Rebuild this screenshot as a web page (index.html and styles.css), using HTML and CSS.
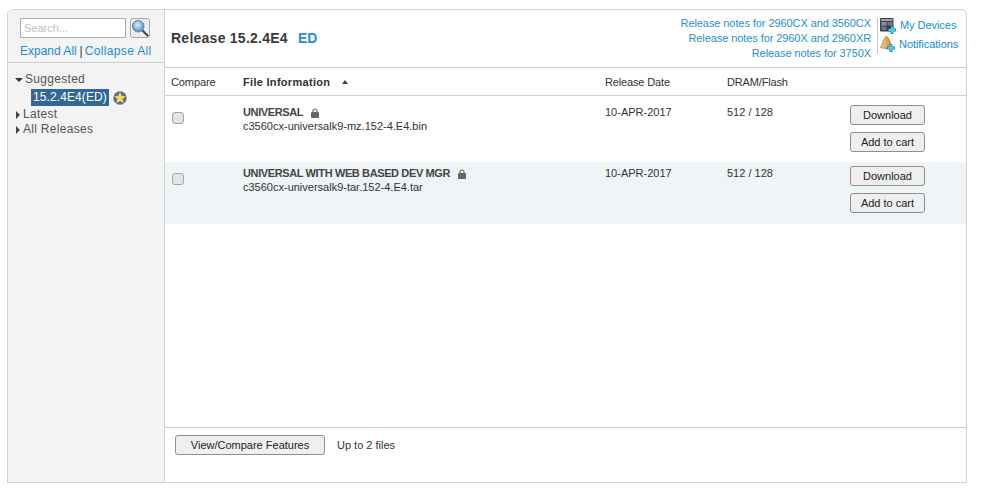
FILE: index.html
```html
<!DOCTYPE html>
<html lang="en">
<head>
<meta charset="utf-8">
<title>Release 15.2.4E4</title>
<link rel="stylesheet" href="styles.css">
</head>
<body>
<div class="panel">
  <aside class="side">
    <div class="side-top">
      <div class="search-row">
        <input class="search" type="text" placeholder="Search...">
        <button class="search-btn" type="button" aria-label="Search">
          <svg width="18" height="18" viewBox="0 0 18 18">
            <defs><radialGradient id="g" cx="0.45" cy="0.4" r="0.7"><stop offset="0" stop-color="#dcecfb"/><stop offset="0.55" stop-color="#7fb0e6"/><stop offset="1" stop-color="#2f6fc4"/></radialGradient></defs>
            <path d="M11 11 L16.5 16.5" stroke="#4a4a4a" stroke-width="2.2" stroke-linecap="round"/>
            <circle cx="7.2" cy="7.2" r="5.8" fill="url(#g)" stroke="#77828e" stroke-width="1"/>
          </svg>
        </button>
      </div>
      <div class="expand"><a>Expand All</a><span class="pipe"> | </span><a class="collapse">Collapse All</a></div>
    </div>
    <ul class="tree">
      <li class="node"><span class="tri-down"></span>Suggested</li>
      <li class="leaf"><span class="sel">15.2.4E4(ED)</span>
        <svg class="star" width="14" height="14" viewBox="0 0 15 15">
          <circle cx="7.5" cy="7.5" r="7.2" fill="#666d76"/>
          <path d="M7.5 2 L9.1 5.6 L13 6 L10 8.5 L10.9 12.4 L7.5 10.4 L4.1 12.4 L5 8.5 L2 6 L5.9 5.6 Z" fill="#f8d84e" stroke="#fff2a8" stroke-width="0.5"/>
        </svg>
      </li>
      <li class="node"><span class="tri-right"></span>Latest</li>
      <li class="node"><span class="tri-right"></span>All Releases</li>
    </ul>
  </aside>
  <main class="main">
    <header class="head">
      <h1 class="title">Release 15.2.4E4<span class="ed">ED</span></h1>
      <div class="notes">
        <a>Release notes for 2960CX and 3560CX</a>
        <a>Release notes for 2960X and 2960XR</a>
        <a>Release notes for 3750X</a>
      </div>
      <div class="tools">
        <div class="tool">
          <svg width="16" height="16" viewBox="0 0 16 16">
            <rect x="0" y="0" width="13.5" height="13.5" rx="1" fill="#3a4450"/>
            <rect x="1" y="1" width="11.5" height="2" fill="#9aa3ad"/>
            <rect x="1.5" y="4" width="5" height="3.5" fill="#8a94a0"/><rect x="7.5" y="4" width="5" height="3.5" fill="#6f7a86"/>
            <rect x="1.5" y="8.5" width="5" height="3.5" fill="#6f7a86"/><rect x="7.5" y="8.5" width="5" height="3.5" fill="#2a3038"/>
            <path d="M12 8 V16 M8 12 H16" stroke="#1c93b8" stroke-width="3"/>
            <path d="M12 9 V15 M9 12 H15" stroke="#5fd6ea" stroke-width="1.4"/>
          </svg>
          <a>My Devices</a>
        </div>
        <div class="tool tool-b">
          <svg width="16" height="16" viewBox="0 0 16 16">
            <defs><linearGradient id="b" x1="0" x2="1" y1="0" y2="0"><stop offset="0" stop-color="#f6d28a"/><stop offset="1" stop-color="#c9802c"/></linearGradient></defs>
            <path d="M6.5 0.5 C7.8 0.5 8.3 1.6 8.5 2.8 C10.6 4 10 8.5 12.6 11.5 Q6.5 14 0.4 11.5 C3 8.5 2.4 4 4.5 2.8 C4.7 1.6 5.2 0.5 6.5 0.5 Z" fill="url(#b)" stroke="#a8702a" stroke-width="0.6"/>
            <path d="M11 8 V16 M7 12 H15" stroke="#1c93b8" stroke-width="3"/>
            <path d="M11 9 V15 M8 12 H14" stroke="#5fd6ea" stroke-width="1.4"/>
          </svg>
          <a>Notifications</a>
        </div>
      </div>
    </header>
    <div class="cols row-grid">
      <span class="cmp">Compare</span>
      <span class="fi">File Information<span class="sort"></span></span>
      <span class="hd">Release Date</span>
      <span class="hd">DRAM/Flash</span>
      <span></span>
    </div>
    <div class="row row-grid">
      <span><input class="check" type="checkbox"></span>
      <div>
        <div class="name">UNIVERSAL<svg class="lock" width="8" height="10" viewBox="0 0 8 10"><path d="M2 4.5V3a2 2 0 0 1 4 0v1.5" fill="none" stroke="#666" stroke-width="1.2"/><rect y="4" width="8" height="6" rx="1" fill="#666"/></svg></div>
        <div class="file">c3560cx-universalk9-mz.152-4.E4.bin</div>
      </div>
      <span class="cell">10-APR-2017</span>
      <span class="cell">512 / 128</span>
      <div class="acts"><button class="btn" type="button">Download</button><button class="btn" type="button">Add to cart</button></div>
    </div>
    <div class="row row-grid shade">
      <span><input class="check" type="checkbox"></span>
      <div>
        <div class="name">UNIVERSAL WITH WEB BASED DEV MGR<svg class="lock" width="8" height="10" viewBox="0 0 8 10"><path d="M2 4.5V3a2 2 0 0 1 4 0v1.5" fill="none" stroke="#666" stroke-width="1.2"/><rect y="4" width="8" height="6" rx="1" fill="#666"/></svg></div>
        <div class="file">c3560cx-universalk9-tar.152-4.E4.tar</div>
      </div>
      <span class="cell">10-APR-2017</span>
      <span class="cell">512 / 128</span>
      <div class="acts"><button class="btn" type="button">Download</button><button class="btn" type="button">Add to cart</button></div>
    </div>
    <footer class="foot">
      <button class="btn btn-wide" type="button">View/Compare Features</button>
      <span>Up to 2 files</span>
    </footer>
  </main>
</div>
</body>
</html>
```
FILE: styles.css
```css
* { box-sizing: border-box; }
html, body { margin: 0; background: #fff; }
body { padding: 9px 18px 14px 7px; font: 11px "Liberation Sans", Arial, sans-serif; color: #333; }
a { color: #1f8fd0; }

.panel { display: flex; height: 474px; width: 960px; border: 1px solid #d2d2d2; border-radius: 6px 6px 0 0; }

.side { width: 157px; flex: none; background: #f3f3f3; border-right: 1px solid #cfcfcf; border-radius: 5px 0 0 0; }
.side-top { height: 53px; padding: 8px 0 0 12px; border-bottom: 1px solid #d0d0d0; }
.search-row { display: flex; align-items: center; gap: 4px; }
.search { width: 106px; height: 20px; padding: 0 3px; border: 1px solid #ababab; background: #fff; font: 11px "Liberation Sans", Arial, sans-serif; margin: 0; outline: 0; }
.search::placeholder { color: #c0c0c0; opacity: 1; }
.search-btn { width: 20px; height: 20px; padding: 0; margin: 0; display: flex; align-items: center; justify-content: center; background: #efefef; border: 1px solid #a8a8a8; border-radius: 3px; }
.expand { margin-top: 6px; font-size: 12px; line-height: 14px; white-space: nowrap; }
.pipe { color: #333; letter-spacing: -0.6px; }
.collapse { letter-spacing: 0.35px; }

.tree { list-style: none; margin: 0; padding: 9px 0 0 8px; font-size: 12px; letter-spacing: 0.3px; color: #555; }
.node { height: 15px; line-height: 15px; display: flex; align-items: center; }
.tri-down { width: 0; height: 0; margin: 0 2px 0 -1px; border: 4px solid transparent; border-top: 4px solid #333; border-bottom: 0; }
.tri-right { width: 0; height: 0; margin-right: 3px; border: 4px solid transparent; border-left: 4px solid #444; border-right: 0; }
.leaf { height: 17px; padding-left: 15px; display: flex; align-items: center; gap: 4px; margin: 2px 0 1px; }
.sel { background: #336699; color: #fff; padding: 0 2px; height: 17px; line-height: 17px; letter-spacing: 0.1px; }
.star { flex: none; }

.main { flex: 1; display: flex; flex-direction: column; min-width: 0; }
.head { height: 58px; display: flex; align-items: flex-start; border-bottom: 1px solid #cfcfcf; }
.title { margin: 20px 0 0 6px; font-size: 14px; line-height: 16px; font-weight: bold; letter-spacing: 0.25px; color: #3a3a3a; white-space: nowrap; }
.ed { margin-left: 10px; letter-spacing: 0; color: #2a8fd0; }
.notes { flex: 1; display: flex; flex-direction: column; align-items: flex-end; padding-top: 6px; line-height: 15px; }
.notes a { font-size: 11px; letter-spacing: -0.08px; color: #2a8fd0; }
.tools { width: 89px; height: 36px; margin: 8px 0 0 6px; padding-left: 2px; border-left: 1px solid #c8c8c8; flex: none; }
.tool { display: flex; align-items: flex-start; gap: 4px; height: 16px; white-space: nowrap; line-height: 14px; }
.tool a { color: #0f90d8; letter-spacing: -0.05px; }
.tool-b { margin-top: 2px; gap: 3px; }
.tool-b a { padding-top: 1px; }

.row-grid { display: grid; grid-template-columns: 72px 362px 122px 123px 1fr; padding-left: 6px; }
.cols { height: 28px; align-items: center; border-bottom: 1px solid #cfcfcf; color: #333; }
.cmp { letter-spacing: -0.1px; }
.hd { letter-spacing: -0.15px; }
.fi { font-weight: bold; letter-spacing: 0.3px; display: flex; align-items: center; }
.sort { width: 0; height: 0; margin-left: 12px; border: 3.5px solid transparent; border-bottom: 4px solid #444; border-top: 0; }
.row { height: 66px; padding-top: 9px; }
.shade { height: 62px; padding-top: 4px; background: #eff4f7; }
.check { appearance: none; margin: 7px 0 0 1px; width: 12px; height: 12px; background: #e4e4e4; border: 1px solid #a4a4a4; border-radius: 3px; }
.name { font-weight: bold; line-height: 13px; letter-spacing: -0.38px; color: #444; margin-top: 1px; white-space: nowrap; }
.lock { margin-left: 8px; vertical-align: -2px; }
.file { line-height: 14px; }
.cell { margin-top: 1px; }
.acts { display: flex; flex-direction: column; gap: 7px; }
.btn { width: 75px; height: 20px; padding: 0; margin: 0; background: #efefef; border: 1px solid #8f8f8f; border-radius: 3px; font: 11px "Liberation Sans", Arial, sans-serif; color: #222; }

.foot { margin-top: auto; height: 55px; border-top: 1px solid #cfcfcf; padding: 7px 0 0 10px; display: flex; align-items: flex-start; gap: 12px; }
.foot span { line-height: 19px; margin-top: 1px; }
.btn-wide { width: 150px; }
```
